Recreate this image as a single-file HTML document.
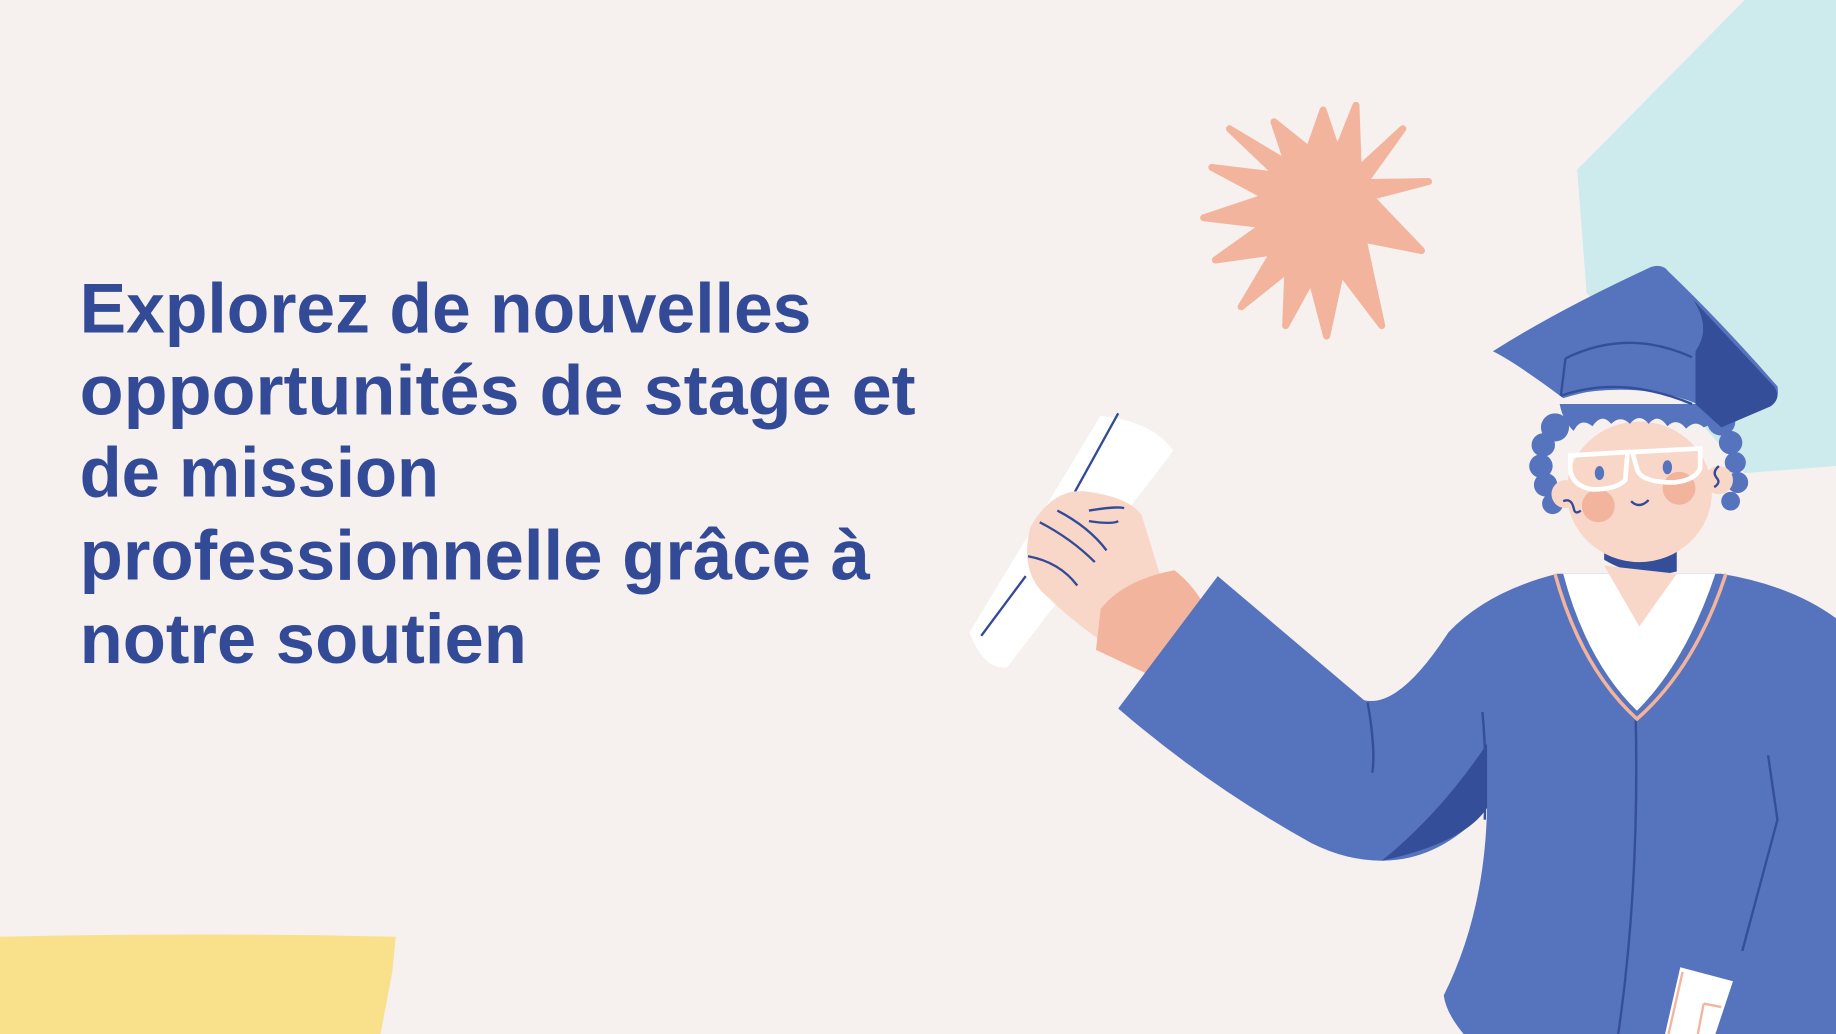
<!DOCTYPE html>
<html><head><meta charset="utf-8"><style>
html,body{margin:0;padding:0;background:#f6f0ef;}
svg{display:block;}
</style></head><body>
<svg width="1836" height="1034" viewBox="0 0 1568 883" preserveAspectRatio="none" xmlns="http://www.w3.org/2000/svg">
<rect width="1568" height="883" fill="#f6f0ef"/>
<polygon points="1490,0 1568,0 1568,398 1490,404 1355,250 1347,145" fill="#cdeaec"/>
<path d="M0,800 Q170,796 338,800 L335,830 L325,883 L0,883 Z" fill="#f9e08a"/>
<g stroke="#f3b49d" stroke-width="6" stroke-linejoin="round">
<polygon fill="#f3b49d" points="1220,155 1170,168 1214,214 1164,204 1180,278 1145,232 1133,287 1120,238 1098,278 1100,230 1060,262 1088,215 1038,222 1080,192 1028,186 1082,168 1035,143 1092,150 1050,110 1100,140 1088,104 1118,128 1130,94 1142,130 1158,90 1160,145 1198,110 1165,156"/>
</g>
<g font-family="'Liberation Sans',sans-serif" font-weight="700" font-size="60" fill="#334a97">
<text x="68" y="284" textLength="625" lengthAdjust="spacingAndGlyphs">Explorez de nouvelles</text>
<text x="68" y="354" textLength="714" lengthAdjust="spacingAndGlyphs">opportunités de stage et</text>
<text x="68" y="424" textLength="307" lengthAdjust="spacingAndGlyphs">de mission</text>
<text x="68" y="495" textLength="675" lengthAdjust="spacingAndGlyphs">professionnelle grâce à</text>
<text x="68" y="566" textLength="382" lengthAdjust="spacingAndGlyphs">notre soutien</text>
</g>
<!-- scroll -->
<path d="M828,540 L940,355 Q985,360 1002,385 L860,570 Q840,572 828,540 Z" fill="#fff"/>
<path d="M955,353 L918,420 M876,492 L838,543" stroke="#334a97" stroke-width="2" fill="none"/>
<!-- hand -->
<path d="M880,450 Q900,415 930,420 Q965,425 975,440 L995,505 L960,560 Q920,535 895,510 Q870,490 880,450 Z" fill="#f8d6c8"/>
<path d="M903,436 Q930,450 945,470 M888,446 Q915,460 935,480 M878,475 Q905,480 920,500 M930,436 Q955,432 960,434 M930,445 Q950,448 955,445" stroke="#334a97" stroke-width="2" fill="none"/>
<!-- cuff -->
<path d="M940,520 Q960,495 1003,487 Q1020,500 1030,520 L1000,585 L936,555 Z" fill="#f3b49d"/>
<!-- gown -->
<path d="M955,605 L1040,492 L1165,598 Q1195,605 1237,540 Q1270,505 1330,490 L1470,490 Q1530,500 1568,528 L1568,883 L1250,883 Q1235,865 1233,850 Q1268,780 1270,690 Q1230,735 1180,735 Q1150,735 1120,720 Q1030,670 955,605 Z" fill="#5673bd"/>
<path d="M1270,635 Q1230,695 1180,735 Q1250,720 1270,690 Z" fill="#344e9a"/>
<path d="M1168,600 Q1175,640 1172,660 M1397,615 Q1400,760 1382,883 M1510,645 L1518,700 L1488,812 M1266,608 Q1270,650 1268,700" stroke="#344e9a" stroke-width="2" fill="none"/>
<!-- collar -->
<path d="M1328,490 Q1350,570 1398,614 Q1448,570 1474,490" stroke="#f3b49d" stroke-width="3" fill="none"/>
<path d="M1335,490 Q1355,565 1398,607 Q1440,565 1465,490 Z" fill="#fff"/>
<path d="M1370,466 L1432,466 L1432,488 Q1400,496 1370,478 Z" fill="#344e9a"/>
<path d="M1370,483 L1400,535 L1432,490 Z" fill="#f8d6c8"/>
<!-- hair back curls -->
<g fill="#5673bd">
<circle cx="1328" cy="365" r="12"/><circle cx="1318" cy="380" r="10"/><circle cx="1316" cy="398" r="10"/><circle cx="1320" cy="414" r="10"/><circle cx="1326" cy="430" r="9"/>
<circle cx="1470" cy="360" r="12"/><circle cx="1478" cy="378" r="10"/><circle cx="1482" cy="395" r="9"/><circle cx="1484" cy="412" r="9"/><circle cx="1478" cy="428" r="8"/>
</g>
<!-- face -->
<ellipse cx="1400" cy="420" rx="62" ry="60" fill="#f8d6c8"/>
<circle cx="1337" cy="422" r="12" fill="#f8d6c8"/><circle cx="1468" cy="410" r="12" fill="#f8d6c8"/>
<circle cx="1365" cy="432" r="14" fill="#f3b49d"/>
<circle cx="1434" cy="417" r="14" fill="#f3b49d"/>
<!-- hair top bumpy -->
<path d="M1332,345 L1465,345 Q1470,360 1455,365 Q1448,358 1440,366 Q1432,356 1424,364 Q1416,352 1408,362 Q1400,352 1392,362 Q1384,354 1376,362 Q1368,352 1360,364 Q1350,356 1344,368 Q1335,360 1332,345 Z" fill="#5673bd"/>
<!-- glasses -->
<path d="M1341,389 L1390,386 L1388,410 Q1380,418 1360,418 Q1342,415 1341,400 Z M1394,386 L1452,383 L1452,400 Q1448,410 1430,412 Q1400,412 1398,400 Z" stroke="#fff" stroke-width="4" fill="none"/>
<ellipse cx="1366" cy="404" rx="4" ry="6" fill="#5673bd"/><ellipse cx="1424" cy="399" rx="4" ry="6" fill="#5673bd"/>
<path d="M1393,428 Q1400,435 1408,427 M1335,428 Q1342,425 1344,434 Q1345,440 1350,436 M1468,398 Q1462,403 1466,408 Q1470,412 1464,416" stroke="#334a97" stroke-width="2" fill="none"/>
<!-- cap -->
<path d="M1335,305 L1450,300 L1450,345 Q1400,325 1335,338 Z" fill="#5673bd"/>
<path d="M1275,300 Q1330,265 1410,228 Q1420,225 1425,232 Q1470,275 1518,330 Q1520,342 1512,347 L1470,365 L1450,345 Q1400,320 1335,340 Q1295,310 1275,300 Z" fill="#5673bd"/>
<path d="M1446,256 Q1462,280 1448,300 L1448,345 L1470,365 L1512,347 Q1522,340 1515,330 Z" fill="#344e9a"/>
<path d="M1337,306 Q1390,280 1445,305 M1333,338 Q1385,320 1445,345 M1337,306 L1333,338" stroke="#344e9a" stroke-width="2" fill="none"/>
<!-- book -->
<path d="M1435,826 L1480,838 L1465,883 L1422,883 Z" fill="#fff"/>
<path d="M1437,830 L1425,883 M1455,857 L1470,860 M1455,857 L1450,883" stroke="#f3b49d" stroke-width="2" fill="none"/>
</svg>
</body></html>
